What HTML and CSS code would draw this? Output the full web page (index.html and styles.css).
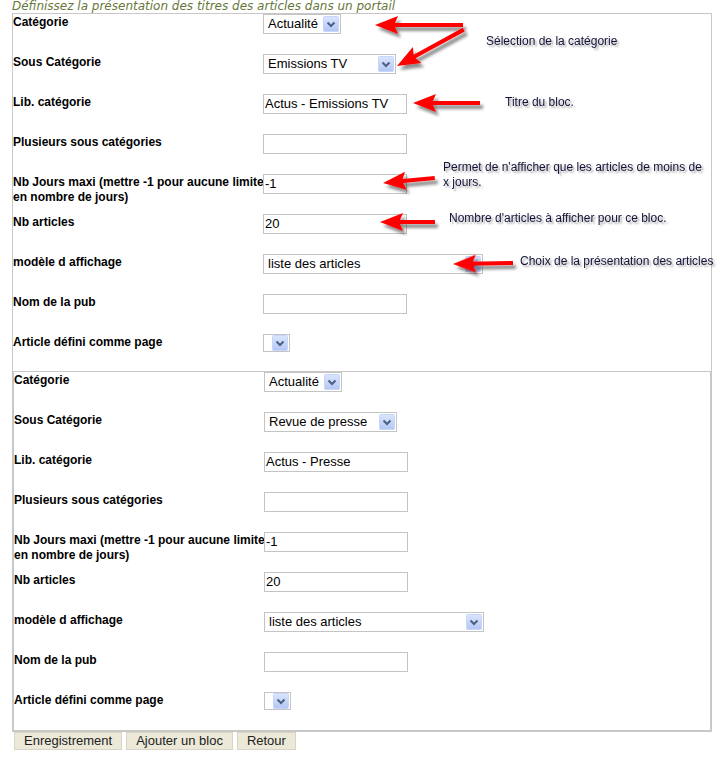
FILE: index.html
```html
<!DOCTYPE html>
<html lang="fr">
<head>
<meta charset="utf-8">
<title>Blocs du portail</title>
<link rel="stylesheet" href="styles.css">
</head>
<body>
<div class="page">
  <div class="title">Définissez la présentation des titres des articles dans un portail</div>
  <div class="outer">
    <div class="block block-first">
      <div class="lbl">Catégorie</div>
      <div class="ctl"><span class="sel w-cat"><span class="sel-txt">Actualité</span><svg class="dd" viewBox="0 0 16 16"><use href="#ddbtn"/></svg></span></div>
      <div class="lbl">Sous Catégorie</div>
      <div class="ctl"><span class="sel w-sub"><span class="sel-txt">Emissions TV</span><svg class="dd" viewBox="0 0 16 16"><use href="#ddbtn"/></svg></span></div>
      <div class="lbl">Lib. catégorie</div>
      <div class="ctl"><span class="inp">Actus - Emissions TV</span></div>
      <div class="lbl">Plusieurs sous catégories</div>
      <div class="ctl"><span class="inp"></span></div>
      <div class="lbl">Nb Jours maxi (mettre -1 pour aucune limite<br>en nombre de jours)</div>
      <div class="ctl"><span class="inp">-1</span></div>
      <div class="lbl">Nb articles</div>
      <div class="ctl"><span class="inp">20</span></div>
      <div class="lbl">modèle d affichage</div>
      <div class="ctl"><span class="sel w-mod"><span class="sel-txt">liste des articles</span><svg class="dd" viewBox="0 0 16 16"><use href="#ddbtn"/></svg></span></div>
      <div class="lbl">Nom de la pub</div>
      <div class="ctl"><span class="inp"></span></div>
      <div class="lbl">Article défini comme page</div>
      <div class="ctl"><span class="sel w-tiny"><span class="sel-txt"></span><svg class="dd" viewBox="0 0 16 16"><use href="#ddbtn"/></svg></span></div>
    </div>
    <div class="block block-second">
      <div class="lbl">Catégorie</div>
      <div class="ctl"><span class="sel w-cat"><span class="sel-txt">Actualité</span><svg class="dd" viewBox="0 0 16 16"><use href="#ddbtn"/></svg></span></div>
      <div class="lbl">Sous Catégorie</div>
      <div class="ctl"><span class="sel w-sub"><span class="sel-txt">Revue de presse</span><svg class="dd" viewBox="0 0 16 16"><use href="#ddbtn"/></svg></span></div>
      <div class="lbl">Lib. catégorie</div>
      <div class="ctl"><span class="inp">Actus - Presse</span></div>
      <div class="lbl">Plusieurs sous catégories</div>
      <div class="ctl"><span class="inp"></span></div>
      <div class="lbl">Nb Jours maxi (mettre -1 pour aucune limite<br>en nombre de jours)</div>
      <div class="ctl"><span class="inp">-1</span></div>
      <div class="lbl">Nb articles</div>
      <div class="ctl"><span class="inp">20</span></div>
      <div class="lbl">modèle d affichage</div>
      <div class="ctl"><span class="sel w-mod"><span class="sel-txt">liste des articles</span><svg class="dd" viewBox="0 0 16 16"><use href="#ddbtn"/></svg></span></div>
      <div class="lbl">Nom de la pub</div>
      <div class="ctl"><span class="inp"></span></div>
      <div class="lbl">Article défini comme page</div>
      <div class="ctl"><span class="sel w-tiny"><span class="sel-txt"></span><svg class="dd" viewBox="0 0 16 16"><use href="#ddbtn"/></svg></span></div>
    </div>
  </div>
  <div class="buttons">
    <span class="btn">Enregistrement</span>
    <span class="btn">Ajouter un bloc</span>
    <span class="btn">Retour</span>
  </div>

  <svg class="arrows" width="727" height="761" viewBox="0 0 727 761">
    <defs>
      <linearGradient id="ddg" x1="0" y1="0" x2="0" y2="1">
        <stop offset="0" stop-color="#dbe5fd"/>
        <stop offset="1" stop-color="#b3c7f4"/>
      </linearGradient>
      <symbol id="ddbtn" viewBox="0 0 16 16">
        <rect x="0.5" y="0.5" width="15" height="15" rx="1" fill="url(#ddg)" stroke="#c7d5fa"/>
        <path d="M4.5 6.5 L8 10 L11.5 6.5" fill="none" stroke="#4d6185" stroke-width="2"/>
      </symbol>
      <filter id="sh" x="-20%" y="-50%" width="150%" height="200%">
        <feGaussianBlur in="SourceAlpha" stdDeviation="1.6"/>
        <feOffset dx="3" dy="4" result="b"/>
        <feComponentTransfer><feFuncA type="linear" slope="0.45"/></feComponentTransfer>
        <feMerge><feMergeNode/><feMergeNode in="SourceGraphic"/></feMerge>
      </filter>
    </defs>
    <g fill="#ff0000" filter="url(#sh)">
      <g transform="translate(375 25)"><path d="M0 0 L23 -9 L20 -2 L88 -2 L88 2 L20 2 L23 9 Z"/></g>
      <g transform="translate(397 66) rotate(-28.6)"><path d="M0 0 L23 -9 L20 -2 L76 -2 L76 2 L20 2 L23 9 Z"/></g>
      <g transform="translate(413 103)"><path d="M0 0 L23 -9 L20 -2 L67 -2 L67 2 L20 2 L23 9 Z"/></g>
      <g transform="translate(383 183) rotate(-5.5)"><path d="M0 0 L23 -9 L20 -2 L52 -2 L52 2 L20 2 L23 9 Z"/></g>
      <g transform="translate(380 222)"><path d="M0 0 L23 -9 L20 -2 L55 -2 L55 2 L20 2 L23 9 Z"/></g>
      <g transform="translate(453 264) rotate(-1)"><path d="M0 0 L23 -9 L20 -2 L60 -2 L60 2 L20 2 L23 9 Z"/></g>
    </g>
  </svg>

  <div class="note n1">Sélection de la catégorie</div>
  <div class="note n2">Titre du bloc.</div>
  <div class="note n3">Permet de n'afficher que les articles de moins de<br>x jours.</div>
  <div class="note n4">Nombre d'articles à afficher pour ce bloc.</div>
  <div class="note n5">Choix de la présentation des articles</div>
</div>
</body>
</html>
```
FILE: styles.css
```css
html, body {
  margin: 0;
  padding: 0;
  background: #ffffff;
}

.page {
  position: relative;
  width: 727px;
  height: 761px;
  padding-left: 12px;
  box-sizing: border-box;
  font-family: "Liberation Sans", Arial, sans-serif;
  color: #000;
}

.title {
  font-family: "DejaVu Sans", Verdana, sans-serif;
  font-style: italic;
  font-size: 12px;
  line-height: 13px;
  height: 13px;
  color: #66773a;
  white-space: nowrap;
}

.outer {
  width: 700px;
  box-sizing: border-box;
  border: 1px solid #c8c8c8;
}

.block {
  display: grid;
  grid-template-columns: 250px 1fr;
  grid-auto-rows: 40px;
}

.block-first {
  grid-template-rows: repeat(8, 40px) 37px;
}

.block-second {
  grid-template-rows: repeat(8, 40px) 38px;
  border: 1px solid #c8c8c8;
}

.lbl {
  font-weight: bold;
  font-size: 12px;
  line-height: 15px;
  padding-top: 1px;
  white-space: nowrap;
}

.ctl {
  display: flex;
  align-items: flex-start;
}

.inp {
  display: block;
  width: 144px;
  height: 20px;
  box-sizing: border-box;
  border: 1px solid #c4c4c4;
  padding-left: 1px;
  font-size: 13px;
  line-height: 18px;
  white-space: nowrap;
  overflow: hidden;
}

.sel {
  display: flex;
  align-items: center;
  height: 20px;
  box-sizing: border-box;
  border: 1px solid #c4c4c4;
  background: #fff;
  font-size: 13px;
  line-height: 18px;
  white-space: nowrap;
}

.sel-txt {
  flex: 1;
  padding-left: 4px;
  overflow: hidden;
}

.dd {
  width: 16px;
  height: 16px;
  margin-right: 1px;
  flex: none;
}

.w-cat { width: 78px; }
.w-sub { width: 133px; }
.w-mod { width: 220px; }
.w-tiny { width: 27px; height: 18px; }

.buttons {
  display: flex;
  gap: 4px;
  padding-left: 2px;
}

.btn {
  display: block;
  height: 18px;
  box-sizing: border-box;
  padding: 0 9px;
  background: #ece9d8;
  border: 1px solid #d8d5c6;
  font-size: 13px;
  line-height: 16px;
  color: #222;
  white-space: nowrap;
}

.arrows {
  position: absolute;
  left: 0;
  top: 0;
  pointer-events: none;
}

.note {
  position: absolute;
  font-size: 12px;
  line-height: 15px;
  color: #14143a;
  white-space: nowrap;
  text-shadow: 2px 2px 2px rgba(0, 0, 0, 0.35);
}

.n1 { left: 486px; top: 34px; }
.n2 { left: 505px; top: 95px; }
.n3 { left: 443px; top: 160px; }
.n4 { left: 449px; top: 211px; }
.n5 { left: 520px; top: 254px; }
```
